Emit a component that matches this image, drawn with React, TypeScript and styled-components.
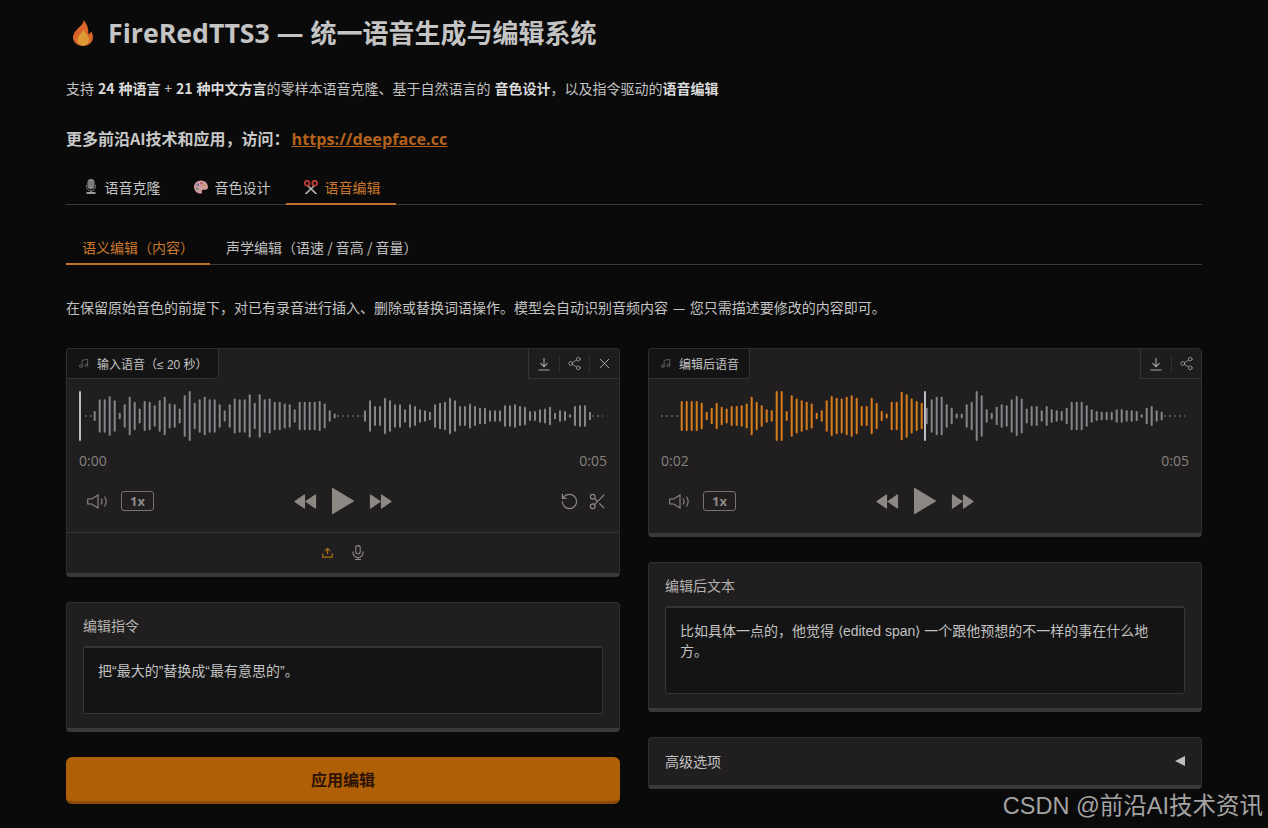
import React from "react";
import styled, { createGlobalStyle } from "styled-components";
import { Music, Share2, X, RotateCcw, Scissors } from "lucide-react";

const Global = createGlobalStyle`
  html, body { margin: 0; padding: 0; background: #0a0a0a; overflow: hidden; }
  body { font-family: "Noto Sans CJK SC", "Liberation Sans", sans-serif; }
  * { box-sizing: border-box; }
`;

const Page = styled.div`
  position: relative;
  width: 1268px;
  height: 828px;
  padding: 0 66px;
  color: #c6c6c6;
  overflow: hidden;
`;
const Title = styled.h1`
  margin: 0;
  padding: 14px 0 0 6px;
  height: 72px;
  display: flex;
  align-items: flex-start;
  gap: 14px;
  font-size: 26px;
  line-height: 38px;
  font-weight: 700;
  color: #c4c4c4;
  font-family: "Open Sans", "Noto Sans CJK SC", sans-serif;
  svg { margin-top: 6px; flex: none; }
`;
const TitleLatin = styled.span`
  font-size: 26.7px;
`;
const Intro = styled.p`
  margin: 0;
  padding-top: 5px;
  height: 53px;
  font-size: 14px;
  line-height: 22px;
  word-spacing: 0.8px;
  color: #c2c2c2;
  strong { color: #dadada; font-weight: 700; }
`;
const More = styled.p`
  margin: 0;
  height: 48px;
  font-size: 16px;
  line-height: 26px;
  font-weight: 700;
  color: #c8c8c8;
  a {
    margin-left: 2px;
    color: #b3621c;
    text-decoration: underline;
    font-family: "Open Sans", sans-serif;
    font-size: 16.2px;
  }
`;
const TopTabs = styled.div`
  display: flex;
  height: 32px;
  border-bottom: 1px solid #3a3a3a;
`;
const TopTab = styled.div<{ $active?: boolean }>`
  width: 110px;
  height: 32px;
  padding: 0 0 3px 18px;
  display: flex;
  align-items: center;
  gap: 6.5px;
  font-size: 14px;
  color: ${(p) => (p.$active ? "#c9782e" : "#c4c4c4")};
  border-bottom: 2px solid ${(p) => (p.$active ? "#c2702a" : "transparent")};
`;
const SubTabs = styled.div`
  display: flex;
  height: 29px;
  margin-top: 31px;
  border-bottom: 1px solid #3a3a3a;
`;
const SubTab = styled.div<{ $active?: boolean }>`
  height: 29px;
  padding: 0 16px 5px;
  display: flex;
  align-items: center;
  font-size: 14px;
  color: ${(p) => (p.$active ? "#c9782e" : "#c0c0c0")};
  border-bottom: 2px solid ${(p) => (p.$active ? "#c2702a" : "transparent")};
`;
const Lead = styled.p`
  margin: 0;
  padding-top: 32px;
  height: 83px;
  font-size: 14px;
  line-height: 20px;
  word-spacing: 1.5px;
  color: #c2c2c2;
`;
const Columns = styled.div`
  display: grid;
  grid-template-columns: 554px 554px;
  gap: 28px;
  align-items: start;
`;
const Column = styled.div`
  display: flex;
  flex-direction: column;
  gap: 25px;
`;
const Panel = styled.section`
  background: #201e1e;
  border: 1px solid #2f2d2d;
  border-bottom: 4px solid #3a3939;
  border-radius: 4px;
`;
const PanelHeader = styled.div`
  display: flex;
  justify-content: space-between;
  height: 30px;
`;
const Chip = styled.div`
  display: flex;
  align-items: center;
  gap: 8px;
  height: 30px;
  padding: 0 10px 0 11px;
  background: #151414;
  border-right: 1px solid #333;
  border-bottom: 1px solid #333;
  border-radius: 4px 0 4px 0;
  font-size: 12px;
  font-family: "Liberation Sans", "Noto Sans CJK SC", sans-serif;
  color: #c2c2c2;
  svg { color: #777; }
`;
const Actions = styled.div`
  display: flex;
  align-items: center;
  height: 30px;
  background: #1e1c1c;
  border-left: 1px solid #333;
  border-bottom: 1px solid #333;
  color: #aaa8a6;
`;
const ActionButton = styled.span`
  width: 30px;
  height: 18px;
  display: flex;
  align-items: center;
  justify-content: center;
  & + & { border-left: 1px solid #302e2e; }
`;
const WaveBox = styled.div`
  padding: 12px 12px 0;
  height: 62px;
`;
const TimeRow = styled.div`
  display: flex;
  justify-content: space-between;
  align-items: center;
  height: 20px;
  margin-top: 9px;
  padding: 0 12px;
  font-size: 14px;
  color: #85827e;
  font-family: "Open Sans", sans-serif;
`;
const Controls = styled.div<{ $last?: boolean }>`
  display: grid;
  grid-template-columns: 1fr auto 1fr;
  align-items: center;
  height: 30px;
  margin: 16px 0 ${(p) => (p.$last ? "17px" : "16px")};
  padding: 0 12px;
  color: #8c8985;
`;
const ControlSide = styled.div<{ $end?: boolean }>`
  display: flex;
  align-items: center;
  gap: ${(p) => (p.$end ? "9px" : "13px")};
  padding-left: ${(p) => (p.$end ? "0" : "8px")};
  justify-content: ${(p) => (p.$end ? "flex-end" : "flex-start")};
  svg { stroke-width: ${(p) => (p.$end ? "1.5px" : "1.1px")}; }
`;
const Speed = styled.span`
  width: 33px;
  height: 20px;
  display: flex;
  align-items: center;
  justify-content: center;
  border: 1px solid #77736f;
  border-radius: 3px;
  font-size: 13px;
  font-weight: 700;
  color: #8c8985;
  font-family: "Open Sans", sans-serif;
`;
const Transport = styled.div`
  display: flex;
  align-items: center;
  gap: 16px;
  svg { stroke: currentColor; stroke-width: 1.2; stroke-linejoin: round; overflow: visible; }
`;
const SourceBar = styled.div`
  height: 41px;
  display: flex;
  align-items: center;
  justify-content: center;
  gap: 19px;
  border-top: 1px solid #373535;
  padding: 0 0 1px 0;
`;
const FieldPanel = styled(Panel)`
  padding: 12px 16px 14px;
`;
const FieldLabel = styled.div`
  height: 20px;
  margin-bottom: 11px;
  font-size: 14px;
  line-height: 20px;
  color: #b4b2b0;
`;
const FieldBox = styled.div<{ $tall?: boolean }>`
  height: ${(p) => (p.$tall ? "88px" : "68px")};
  padding: 13px 14px;
  background: #151414;
  border: 1px solid #363434;
  border-top-width: 2px;
  border-radius: 3px;
  font-family: "Liberation Sans", "Noto Sans CJK SC", sans-serif;
  font-size: 14px;
  line-height: 20px;
  color: #c2c2c2;
`;
const ApplyButton = styled.button`
  display: block;
  width: 100%;
  height: 47px;
  padding: 0;
  border: 0;
  border-bottom: 3px solid #8b4a08;
  border-radius: 6px;
  background: #af5f05;
  color: #2c1305;
  font: 700 16px "Noto Sans CJK SC", sans-serif;
`;
const Accordion = styled(Panel)`
  height: 52px;
  padding: 0 16px 2px;
  display: flex;
  align-items: center;
  justify-content: space-between;
  font-size: 14px;
  color: #c2c2c2;
`;
const Arrow = styled.span`
  width: 0;
  height: 0;
  border-style: solid;
  border-width: 5px 10px 5px 0;
  border-color: transparent #bdbdbd transparent transparent;
`;
const Watermark = styled.div`
  position: absolute;
  right: 5px;
  bottom: 7px;
  font-size: 23.5px;
  line-height: 30px;
  color: #a3a3a3;
  font-family: "Liberation Sans", "Noto Sans CJK SC", sans-serif;
  white-space: nowrap;
`;

const leftA = [30,100,100,118,95,20,70,115,85,45,90,85,65,95,115,75,70,45,125,150,80,100,115,100,100,70,35,70,105,100,100,130,80,130,100,105,85,85,75,70,40,85,85,85,85,90,75,35,15];
const leftB = [35,95,60,60,110,95,70,70,40,70,60,40,35,25,70,80,85,110,95,60,60,75,60,50,50,35,35,35,65,65,70,60,55,30,30,40,45,55,20,35,30,10,60,65,65,25];
const rightA = [90,90,90,90,80,25,50,80,55,45,60,60,65,75,115,85,65,40,35,150,150,30,125,105,95,85,75,20,35,95,120,110,105,115,125,110,60,60,110,80,30,15,85,85,145,130,105,90,80,50,100,115,115,70,50,15,15,70,85,150,125,40,20,55,70,65,100,120,105,45,60,60,35,60,40,35,30,50,85,85,85,65,40,30,25,25,25,40,40,35,35,30,10,50,60,35,25];

type Seg = { start: number; values: number[] };
const Wave = ({ segs, dots, head, progress }: { segs: Seg[]; dots: [number, number][]; head: number; progress: number }) => (
  <svg width="528" height="50" viewBox="0 0 528 50" aria-hidden="true">
    {dots.map(([a, b], i) => (
      <line key={i} x1={a} x2={b} y1="25" y2="25" stroke="#85858a" strokeWidth="1" strokeDasharray="2 3" />
    ))}
    {segs.map((s, si) =>
      s.values.map((v, i) => {
        const x = s.start + i * 5;
        const h = v / 3;
        return (
          <rect key={si + "-" + i} x={x - 1} y={25 - h / 2} width="2" height={h} rx="1" fill={x < progress ? "#d97d1c" : "#85858a"} />
        );
      })
    )}
    <rect x={head - 1} y="0" width="2" height="50" rx="1" fill="#bcbcc6" />
  </svg>
);

const Flame = () => (
  <svg width="22" height="26" viewBox="0 0 22 26" aria-hidden="true">
    <path d="M11.500 0C12 4.500 6.500 7 3.200 11.500 .5 15.200 .3 19 2.500 22c2 2.700 5.200 4 8.500 4s6.500-1.300 8.500-4c2.200-3 2-7-.2-10.500-.9 1.400-1.900 2.300-3 2.700C16.800 9 15 3.500 11.500 0Z" fill="#d9652a" />
    <path d="M11.500 9c.3 3-6 6-6 11 0 3.500 2.500 5.500 5.500 5.500S17 23.500 17 20c0-4.500-4-6.500-5.500-11Z" fill="#dd9a35" />
  </svg>
);
const MicEmoji = () => (
  <svg width="14" height="15" viewBox="0 0 14 15" aria-hidden="true">
    <rect x="3.500" y="0" width="7" height="10" rx="3.500" fill="#8e8e92" />
    <path d="M4 3h6M4 5h6M4 7h6" stroke="#5a5a5e" strokeWidth="0.8" />
    <path d="M2.500 6v1.500a4.500 4.500 0 0 0 9 0V6" fill="none" stroke="#77777b" strokeWidth="1" />
    <rect x="6.300" y="11" width="1.400" height="2.500" fill="#77777b" />
    <rect x="2.500" y="13" width="9" height="2" rx="0.500" fill="#9c9ca0" />
  </svg>
);
const PaletteEmoji = () => (
  <svg width="14" height="14" viewBox="0 0 15 14" aria-hidden="true">
    <path d="M7.500 0C3.400 0 0 3 0 7s3.400 7 7 7c1.600 0 1.900-1 1.500-2-.5-1.200.3-2 1.500-2h2.500c1.500 0 2.500-1.200 2.500-3 0-4-3.500-7-7.500-7Z" fill="#cf9a9e" />
    <circle cx="4" cy="4.500" r="1.300" fill="#5d6a9a" />
    <circle cx="8" cy="3" r="1.300" fill="#a55e5e" />
    <circle cx="11.500" cy="5.500" r="1.300" fill="#b8a24e" />
    <circle cx="3.500" cy="9" r="1.300" fill="#5e8f6c" />
  </svg>
);
const ScissorsEmoji = () => (
  <svg width="14" height="14" viewBox="0 0 14 14" aria-hidden="true">
    <path d="M4 6 12.500 14M10 6 1.500 14" stroke="#b5b5b5" strokeWidth="1.700" />
    <circle cx="3.200" cy="3.200" r="2.400" fill="none" stroke="#c23e34" strokeWidth="1.700" />
    <circle cx="10.800" cy="3.200" r="2.400" fill="none" stroke="#c23e34" strokeWidth="1.700" />
  </svg>
);
const Download = () => (
  <svg width="14" height="14" viewBox="0 0 14 14" fill="none" stroke="currentColor" strokeWidth="1.100" aria-hidden="true">
    <path d="M7 1v8.500M3.500 6.200 7 9.700l3.500-3.500M1.500 13h11" />
  </svg>
);
const Speaker = () => (
  <svg width="21" height="15" viewBox="0 0 21 15" fill="none" stroke="currentColor" strokeWidth="1.100" aria-hidden="true">
    <path d="M.7 5h4L11 1v13L4.700 10h-4ZM14 4.500c1.200 1.700 1.200 4.300 0 6M17.500 2.500c2 3 2 7 0 10" />
  </svg>
);
const Rewind = () => (
  <svg width="22" height="15" viewBox="0 0 22 15" fill="currentColor" aria-hidden="true">
    <path d="M1 7.500 10.500 1v13ZM12 7.500 21.500 1v13Z" />
  </svg>
);
const Forward = () => (
  <svg width="22" height="15" viewBox="0 0 22 15" fill="currentColor" aria-hidden="true">
    <path d="M.5 1l9.500 6.500L.5 14ZM11.500 1 21 7.500 11.500 14Z" />
  </svg>
);
const Play = () => (
  <svg width="22" height="26" viewBox="0 0 22 26" fill="currentColor" aria-hidden="true">
    <path d="M.6 .6 21.400 13 .6 25.400Z" />
  </svg>
);
const UploadIcon = () => (
  <svg width="11" height="11" viewBox="0 0 12 12" fill="none" stroke="#a86f14" strokeWidth="1.300" aria-hidden="true">
    <path d="M6 8V1.500M3 4.500 6 1.500l3 3M.8 7v4h10.400V7" />
  </svg>
);
const MicIcon = () => (
  <svg width="12" height="15" viewBox="0 0 12 15" fill="none" stroke="#8d8a86" strokeWidth="1.100" aria-hidden="true">
    <rect x="3.800" y=".6" width="4.400" height="8.400" rx="2.200" />
    <path d="M1 6.500v1a5 5 0 0 0 10 0v-1M6 12.500v2M3 14.500h6" />
  </svg>
);

const Player = ({ label, children, actions, footer, extra }: { label: string; children: React.ReactNode; actions: React.ReactNode; footer?: boolean; extra?: boolean }) => (
  <Panel>
    <PanelHeader>
      <Chip>
        <Music size={11} strokeWidth={1.5} />
        {label}
      </Chip>
      <Actions>{actions}</Actions>
    </PanelHeader>
    {children}
    <Controls $last={!footer}>
      <ControlSide>
        <Speaker />
        <Speed>1x</Speed>
      </ControlSide>
      <Transport>
        <Rewind />
        <Play />
        <Forward />
      </Transport>
      <ControlSide $end>
        {extra && <RotateCcw size={19} />}
        {extra && <Scissors size={19} />}
      </ControlSide>
    </Controls>
    {footer && (
      <SourceBar>
        <UploadIcon />
        <MicIcon />
      </SourceBar>
    )}
  </Panel>
);

export default function App() {
  return (
    <Page>
      <Global />
      <Title>
        <Flame />
        <span><TitleLatin>FireRedTTS3 — </TitleLatin>统一语音生成与编辑系统</span>
      </Title>
      <Intro>
        支持 <strong>24 种语言</strong> + <strong>21 种中文方言</strong>的零样本语音克隆、基于自然语言的 <strong>音色设计</strong>，以及指令驱动的<strong>语音编辑</strong>
      </Intro>
      <More>
        更多前沿AI技术和应用，访问：<a href="#">https://deepface.cc</a>
      </More>
      <TopTabs>
        <TopTab><MicEmoji />语音克隆</TopTab>
        <TopTab><PaletteEmoji />音色设计</TopTab>
        <TopTab $active><ScissorsEmoji />语音编辑</TopTab>
      </TopTabs>
      <SubTabs>
        <SubTab $active>语义编辑（内容）</SubTab>
        <SubTab>声学编辑（语速 / 音高 / 音量）</SubTab>
      </SubTabs>
      <Lead>在保留原始音色的前提下，对已有录音进行插入、删除或替换词语操作。模型会自动识别音频内容 — 您只需描述要修改的内容即可。</Lead>
      <Columns>
        <Column>
          <Player
            label="输入语音（≤ 20 秒）"
            footer
            extra
            actions={
              <>
                <ActionButton><Download /></ActionButton>
                <ActionButton><Share2 size={15} strokeWidth={1.2} /></ActionButton>
                <ActionButton><X size={17} strokeWidth={1.4} /></ActionButton>
              </>
            }
          >
            <WaveBox>
              <Wave segs={[{ start: 15.7, values: leftA }, { start: 286, values: leftB }]} dots={[[6, 14], [258, 284], [513, 524]]} head={1} progress={0} />
            </WaveBox>
            <TimeRow><span>0:00</span><span>0:05</span></TimeRow>
          </Player>
          <FieldPanel>
            <FieldLabel>编辑指令</FieldLabel>
            <FieldBox>把“最大的”替换成“最有意思的”。</FieldBox>
          </FieldPanel>
          <ApplyButton>应用编辑</ApplyButton>
        </Column>
        <Column>
          <Player
            label="编辑后语音"
            actions={
              <>
                <ActionButton><Download /></ActionButton>
                <ActionButton><Share2 size={15} strokeWidth={1.2} /></ActionButton>
              </>
            }
          >
            <WaveBox>
              <Wave segs={[{ start: 20.7, values: rightA }]} dots={[[0, 18], [503, 524]]} head={264} progress={264} />
            </WaveBox>
            <TimeRow><span>0:02</span><span>0:05</span></TimeRow>
          </Player>
          <FieldPanel>
            <FieldLabel>编辑后文本</FieldLabel>
            <FieldBox $tall>比如具体一点的，他觉得 ⟨edited span⟩ 一个跟他预想的不一样的事在什么地方。</FieldBox>
          </FieldPanel>
          <Accordion>
            高级选项
            <Arrow />
          </Accordion>
        </Column>
      </Columns>
      <Watermark>CSDN @前沿AI技术资讯</Watermark>
    </Page>
  );
}
